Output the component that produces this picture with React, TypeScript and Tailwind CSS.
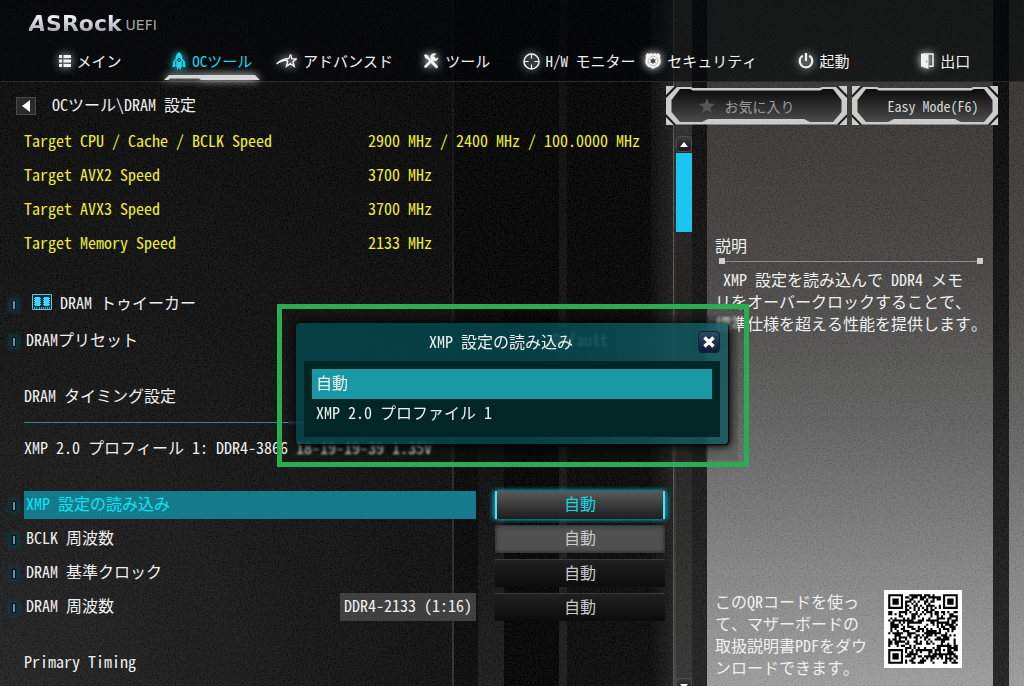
import type { ReactNode } from "react";

type Tone = "active" | "pressed" | "idle";

function ListIcon() {
  return (
    <svg viewBox="0 0 12 12" className="h-3 w-3" fill="currentColor" aria-hidden="true">
      <path d="M0 0h3v3H0zM0 4.5h3v3H0zM0 9h3v3H0zM4.5 0H12v3H4.5zM4.5 4.5H12v3H4.5zM4.5 9H12v3H4.5z" />
    </svg>
  );
}

function RocketIcon() {
  return (
    <svg viewBox="0 0 14 18" className="h-[18px] w-3.5" aria-hidden="true">
      <path
        fill="currentColor"
        d="M7 0C4.600 1.600 3.600 4 3.500 7L1.200 9.600.5 15.500 3.600 14.200 5 15v2.600h1.200V16h1.600v1.600H9V15l1.400-.8 3.100 1.300-.7-5.900L10.500 7C10.400 4 9.400 1.600 7 0z"
      />
      <path d="M3.700 9v4.500M10.300 9v4.500" stroke="#06282e" strokeWidth=".7" />
      <circle cx="7" cy="8" r="1.500" fill="none" stroke="#06282e" strokeWidth="1" />
    </svg>
  );
}

function ShootingStarIcon() {
  return (
    <svg viewBox="0 0 21 16" className="h-4 w-[21px]" fill="none" stroke="currentColor" aria-hidden="true">
      <path d="M14.500 1.500l1.500 4.400h4.200l-3.300 2.800 1.300 4.600-3.900-2.700-3.900 2.700 1.300-4.500-2.600-2.600" strokeWidth="1.400" />
      <path d="M14.500 1.500L13 5.400C8.500 5.600 4 7 .5 11c4-2.800 7.500-3.900 11.500-3.800" strokeWidth="1.200" />
    </svg>
  );
}

function ToolsIcon() {
  return (
    <svg viewBox="0 0 16 16" className="h-4 w-4" aria-hidden="true">
      <path d="M1 2.500L2.500 1l3 1.700.4 1.500 3 3-1.700 1.700-3-3-1.500-.4z" fill="currentColor" />
      <path d="M9.500 9.500l4 4.200" stroke="currentColor" strokeWidth="3" strokeLinecap="round" />
      <path d="M11 5L2.600 13.500" stroke="currentColor" strokeWidth="2.600" strokeLinecap="round" />
      <path d="M13.500 1A4 4 0 1 0 15.300 4.200l-2 1.400-2-.6-.6-1.900z" fill="currentColor" />
    </svg>
  );
}

function TargetIcon() {
  return (
    <svg viewBox="0 0 17 17" className="h-[17px] w-[17px]" fill="none" stroke="currentColor" aria-hidden="true">
      <circle cx="8.500" cy="8.500" r="7.500" strokeWidth="1.500" />
      <path d="M8.500 1v4.500M8.500 11.500V16M1 8.500h4.500M11.500 8.500H16" strokeWidth="1.200" />
    </svg>
  );
}

function BadgeIcon() {
  return (
    <svg viewBox="0 0 16 16" className="h-4 w-4" aria-hidden="true">
      <path
        fill="currentColor"
        d="M2.500 0l2 1 1.500-.9L8 1l2-.9 1.500.9 2-1L15.500 2.500c-1 2 .3 4 .2 6.500-.1 3-2.500 5-5.200 5.600L8 16l-2.500-1.400C2.800 14 .4 12 .3 9 .2 6.500 1.500 4.500.5 2.500z"
      />
      <circle cx="8" cy="8" r="4.800" fill="none" stroke="#999" strokeWidth=".6" />
      <path fill="#444" d="M8 4.500l.9 1.900 2.100-.1L9.900 8l1.100 1.700-2.100-.1L8 11.500l-.9-1.900-2.100.1L6.100 8 5 6.300l2.100.1z" />
    </svg>
  );
}

function PowerIcon() {
  return (
    <svg viewBox="0 0 16 16" className="h-4 w-4" fill="none" stroke="currentColor" strokeWidth="2.200" aria-hidden="true">
      <path d="M8 0v8" />
      <path d="M4.800 2.600a6.300 6.300 0 1 0 6.400 0" />
    </svg>
  );
}

function DoorIcon() {
  return (
    <svg viewBox="0 0 13 16" className="h-4 w-[13px]" aria-hidden="true">
      <path fill="currentColor" fillRule="evenodd" d="M0 .5L7.500 2v14L0 13.500zM5 7.500v2h1.300v-2z" />
      <path fill="none" stroke="currentColor" strokeWidth="1.500" d="M2 .9h10v12.300H8" />
    </svg>
  );
}

function DimmIcon() {
  return (
    <svg viewBox="0 0 20 16" className="h-4 w-5" aria-hidden="true">
      <path d="M.5.5h19v15H.5z" fill="#0b2f3c" stroke="#5cc8e8" />
      <path
        d="M3 3h5v9H3zM12 3h5v9h-5zM2 4h7v1H2zM2 6h7v1H2zM2 8h7v1H2zM2 10h7v1H2zM11 4h7v1h-7zM11 6h7v1h-7zM11 8h7v1h-7zM11 10h7v1h-7z"
        fill="#45d4fb"
      />
      <path d="M2 14h4M7 14h11" stroke="#5cc8e8" strokeWidth="1.500" strokeDasharray="1 1" />
    </svg>
  );
}

function Bullet() {
  return (
    <span className="mt-0.5 mr-1 ml-2.5 flex h-3 w-2 shrink-0 items-center justify-center bg-[#0a3038] shadow-[0_0_4px_1px_#0d3f48]">
      <span className="flex h-2.5 w-1 items-center justify-center bg-[#041319]">
        <span className="h-2 w-0.5 bg-[#6f8c9c]" />
      </span>
    </span>
  );
}

const NAV: { label: string; icon: ReactNode; active?: boolean }[] = [
  { label: "メイン", icon: <ListIcon /> },
  { label: "OCツール", icon: <RocketIcon />, active: true },
  { label: "アドバンスド", icon: <ShootingStarIcon /> },
  { label: "ツール", icon: <ToolsIcon /> },
  { label: "H/W モニター", icon: <TargetIcon /> },
  { label: "セキュリティ", icon: <BadgeIcon /> },
  { label: "起動", icon: <PowerIcon /> },
  { label: "出口", icon: <DoorIcon /> },
];

function Header() {
  return (
    <header className="flex h-[82px] flex-col justify-between border-b border-[#2a2a2a] bg-[#020506]/60 pt-3">
      <div className="flex items-end gap-1 pl-[29px]">
        <span className="bg-linear-to-b from-white via-[#c8ced6] to-[#8e979f] bg-clip-text font-['DejaVu_Sans'] text-[22px] leading-6 font-bold text-transparent">
          <i>A</i>SRock
        </span>
        <span className="font-['DejaVu_Sans'] text-sm leading-[22px] text-[#a4a8aa]">UEFI</span>
      </div>
      <nav className="grid grid-cols-8 pr-[17px] pl-[29px] text-[15px]">
        {NAV.map((item) => (
          <a
            key={item.label}
            href="#"
            className={
              "flex flex-col items-center whitespace-nowrap " + (item.active ? "text-[#1fd5ee]" : "text-[#f2f2f2]")
            }
          >
            <span className="flex h-7 items-center gap-1.5">
              <span className="drop-shadow-[0_0_4px_currentColor]">{item.icon}</span>
              {item.label}
            </span>
            <svg
              viewBox="0 0 96 6"
              className="h-1.5 w-24 drop-shadow-[0_0_4px_#ffffff]"
              aria-hidden="true"
              visibility={item.active ? "visible" : "hidden"}
            >
              <path d="M5 0h86l5 5H37l-2-1.500H6L4.500 5H0z" fill="#d6d6d6" />
            </svg>
          </a>
        ))}
      </nav>
    </header>
  );
}

function Frame({ w, children, className }: { w: number; children: ReactNode; className: string }) {
  return (
    <button type="button" className={"relative h-[39px] text-sm " + className}>
      <svg
        viewBox={`0 0 ${w} 39`}
        preserveAspectRatio="none"
        className="absolute inset-0 h-full w-full"
        aria-hidden="true"
      >
        <defs>
          <linearGradient id={`face${w}`} x1="0" y1="0" x2="0" y2="1">
            <stop offset="0" stopColor="#0b0b0b" />
            <stop offset="1" stopColor="#4c4c4c" />
          </linearGradient>
        </defs>
        <g fill="#cbcbcb">
          <path d={`M0 12L11 1H25L27 2H${w - 27}L${w - 25} 1H${w - 11}L${w} 12V28L${w - 10} 38.500H10L0 28z`} />
          <path d={`M0 0H9L0 9zM${w} 0V9L${w - 9} 0zM0 39V31L8 39zM${w} 39H${w - 8}L${w} 31z`} />
        </g>
        <path
          d={`M5.500 14L14 3H24L27 4.500H${w - 27}L${w - 24} 3H${w - 14}L${w - 5.5} 14V26L${w - 14} 36H${w - 37}L${w - 43} 33H42L36 36H14L5.500 26z`}
          fill={`url(#face${w})`}
        />
        <path
          d={`M0 10.500L10 0M${w} 10.500L${w - 10} 0M0 29.500L9 39M${w} 29.500L${w - 9} 39`}
          stroke="#161616"
          strokeWidth="1.400"
        />
      </svg>
      <span className="relative flex items-center justify-center gap-2.5 whitespace-nowrap">{children}</span>
    </button>
  );
}

function ValueButton({ tone, label }: { tone: Tone; label: string }) {
  const tones = {
    active:
      "border-x-2 border-[#53dcf4] bg-linear-to-b from-[#5a5a5a] to-[#1d1d1d] text-[#14d8e4] shadow-[-2px_0_5px_#159ab0,2px_0_5px_#159ab0]",
    pressed: "bg-[#505050] text-[#c9c9c9] shadow-[inset_0_0_5px_#1f1f1f]",
    idle: "border-t border-[#3a3a3a] bg-linear-to-b from-[#202020] to-[#0c0c0c] text-[#c9c9c9]",
  };
  return (
    <button
      type="button"
      aria-label={label}
      aria-haspopup="listbox"
      className={"h-7 w-[170px] shrink-0 pb-1 " + tones[tone]}
    >
      自動
    </button>
  );
}

function SettingRow({ label, tone, note }: { label: string; tone: Tone; note?: string }) {
  const selected = tone === "active";
  return (
    <div className="flex h-[34px] items-center">
      <Bullet />
      <div
        className={
          "mr-[19px] ml-0.5 flex h-7 min-w-0 flex-1 items-center justify-between pl-0.5 whitespace-nowrap " +
          (selected ? "bg-[#167a8d] text-[#12e3ee]" : "")
        }
      >
        <span className="pb-1">{label}</span>
        {note && <span className="bg-[#404040] px-1 pb-1 leading-6">{note}</span>}
      </div>
      <ValueButton tone={tone} label={label} />
    </div>
  );
}

const SPEEDS = [
  ["Target CPU / Cache / BCLK Speed", "2900 MHz / 2400 MHz / 100.0000 MHz"],
  ["Target AVX2 Speed", "3700 MHz"],
  ["Target AVX3 Speed", "3700 MHz"],
  ["Target Memory Speed", "2133 MHz"],
];

function Settings() {
  return (
    <section className="min-w-0 flex-1">
      <dl className="pl-6 text-[#eeee3a]">
        {SPEEDS.map(([name, value]) => (
          <div key={name} className="flex h-[34px] items-center pb-1 whitespace-nowrap">
            <dt className="w-[344px] shrink-0">{name}</dt>
            <dd>{value}</dd>
          </div>
        ))}
      </dl>
      <div className="mt-[26px] flex h-[34px] items-center">
        <Bullet />
        <a href="#" className="ml-2.5 flex items-center gap-2 pb-1">
          <DimmIcon />
          DRAM トゥイーカー
        </a>
      </div>
      <div className="mt-[3px] flex h-[34px] items-center">
        <Bullet />
        <span className="ml-0.5 min-w-0 flex-1 pb-1 pl-0.5">DRAMプリセット</span>
        <button type="button" aria-label="DRAMプリセット" className="w-[170px] pb-1 text-[#c9c9c9]">
          Default
        </button>
      </div>
      <h2 className="mt-[22px] flex h-[34px] items-center pb-1 pl-6">DRAM タイミング設定</h2>
      <hr className="mt-2 ml-6 h-px border-0 bg-[#3f8299]" />
      <p className="mt-[9px] flex h-[34px] items-center pb-1 pl-6 whitespace-nowrap">
        XMP 2.0 プロフィール 1: DDR4-3866 18-19-19-39 1.35V
      </p>
      <div className="mt-[22px]">
        <SettingRow label="XMP 設定の読み込み" tone="active" />
        <SettingRow label="BCLK 周波数" tone="pressed" />
        <SettingRow label="DRAM 基準クロック" tone="idle" />
        <SettingRow label="DRAM 周波数" tone="idle" note="DDR4-2133 (1:16)" />
      </div>
      <h2 className="mt-[22px] flex h-[34px] items-center pb-1 pl-6">Primary Timing</h2>
    </section>
  );
}

function ScrollBar() {
  const cap =
    "flex h-4 w-4 shrink-0 items-center justify-center rounded-sm border border-[#4b4b4b] bg-linear-to-b from-[#3a3a3a] to-[#1b1b1b]";
  return (
    <div className="mt-[11px] -mb-2 ml-[11px] flex w-4 shrink-0 flex-col">
      <button type="button" aria-label="上へ" className={cap}>
        <svg viewBox="0 0 8 5" className="h-[5px] w-2" fill="#fff" aria-hidden="true">
          <path d="M4 0l4 5H0z" />
        </svg>
      </button>
      <div className="flex-1 bg-black/20 pt-px">
        <div className="h-[79px] bg-[#1cc4f0]" />
      </div>
      <button type="button" aria-label="下へ" className={cap}>
        <svg viewBox="0 0 8 5" className="h-[5px] w-2" fill="#fff" aria-hidden="true">
          <path d="M4 5l4-5H0z" />
        </svg>
      </button>
    </div>
  );
}

const QR_SIZE = 33;

function finder(x: number, y: number) {
  const far = QR_SIZE - 7;
  const fx = x < 8 ? x : x >= far - 1 ? x - far : -9;
  const fy = y < 8 ? y : y >= far - 1 ? y - far : -9;
  if (fx === -9 || fy === -9 || (x > 8 && y > 8)) return null;
  if (fx < 0 || fy < 0 || fx > 6 || fy > 6) return false;
  const ring = Math.max(Math.abs(fx - 3), Math.abs(fy - 3));
  return ring !== 2;
}

function moduleOn(x: number, y: number) {
  const f = finder(x, y);
  if (f !== null) return f;
  const ring = Math.max(Math.abs(x - 26), Math.abs(y - 26));
  if (ring <= 2) return ring !== 1;
  if (x === 6) return y % 2 === 0;
  if (y === 6) return x % 2 === 0;
  let h = (x * 374761393 + y * 668265263) | 0;
  h = Math.imul(h ^ (h >>> 13), 1274126177);
  return ((h ^ (h >>> 16)) & 15) < 8;
}

function QrCode() {
  let d = "";
  for (let y = 0; y < QR_SIZE; y++) {
    for (let x = 0; x < QR_SIZE; x++) {
      if (moduleOn(x, y)) d += `M${x} ${y}h1v1h-1z`;
    }
  }
  return (
    <svg viewBox="-2 -2 37 37" className="h-[78px] w-[78px] shrink-0 bg-white" role="img">
      <path d={d} fill="#000" />
    </svg>
  );
}

function Help() {
  return (
    <aside className="mr-[31px] ml-[15px] flex w-[286px] shrink-0 flex-col pl-2 leading-[22px]">
      <h2 className="mt-[109px]">説明</h2>
      <div className="mt-0.5 mr-2.5 ml-1 flex h-1.5 items-center">
        <span className="h-1.5 w-1.5 bg-[#cfcfcf]" />
        <span className="h-px flex-1 bg-[#8b8b88]" />
        <span className="h-1.5 w-1.5 bg-[#cfcfcf]" />
      </div>
      <p className="mt-1 whitespace-pre">
        {" XMP 設定を読み込んで DDR4 メモ\nリをオーバークロックすることで、\n標準仕様を超える性能を提供します。"}
      </p>
      <div className="mt-auto mb-2 flex items-start justify-between pr-[31px]">
        <p className="w-[154px] whitespace-pre">
          {"このQRコードを使っ\nて、マザーボードの\n取扱説明書PDFをダウ\nンロードできます。"}
        </p>
        <QrCode />
      </div>
    </aside>
  );
}

function Dialog() {
  return (
    <div className="absolute top-[304px] left-1/2 ml-px w-[472px] -translate-x-1/2 border-[5px] border-[#2aad50] pt-3.5 pr-4 pb-[18px] pl-3.5">
      <div className="absolute inset-x-1.5 top-1.5 bottom-0.5 bg-black/10 backdrop-blur-[1px]" />
      <div
        role="dialog"
        aria-labelledby="dialog-title"
        className="relative rounded bg-linear-to-r from-[#04484e]/85 via-[#04484e]/85 to-[#145c62]/85 px-2 pb-[7px] shadow-[1px_1px_2px_#000,3px_3px_8px_#000a,0_0_8px_#000a]"
      >
        <div className="flex h-[38px] items-center">
          <h2 id="dialog-title" className="flex-1 pb-0.5 text-center">
            XMP 設定の読み込み
          </h2>
          <button
            type="button"
            aria-label="閉じる"
            className="flex h-[22px] w-[22px] items-center justify-center rounded-sm border border-[#0b2238] bg-linear-to-b from-[#2c4a66] to-[#0e1c33]"
          >
            <svg viewBox="0 0 12 12" className="h-3 w-3" stroke="#fff" strokeWidth="3.400" aria-hidden="true">
              <path d="M1.500 1.500l9 9M10.500 1.500l-9 9" />
            </svg>
          </button>
        </div>
        <div role="listbox" aria-labelledby="dialog-title" className="flex flex-col bg-[#022626] p-2">
          <button
            type="button"
            role="option"
            aria-selected="true"
            className="h-[30px] bg-[#1a97a4] px-1 pb-1 text-left"
          >
            自動
          </button>
          <button type="button" role="option" aria-selected="false" className="h-[30px] px-1 pb-1 text-left">
            XMP 2.0 プロファイル 1
          </button>
        </div>
      </div>
    </div>
  );
}

function Backdrop() {
  return (
    <div className="absolute inset-0 -z-10 bg-[#060606]" aria-hidden="true">
      <div className="flex h-full">
        <div className="flex-1 bg-[radial-gradient(circle_at_0%_100%,#232323,#101010_50%,#060606_90%)]" />
        <div className="w-0.5 bg-linear-to-b from-[#0c0c0c] to-[#333333]" />
        <div className="w-6 bg-linear-to-b from-[#020202] to-[#090909]" />
        <div className="w-[26px] bg-linear-to-b from-[#020202] via-[#050505] to-[#1c1c1c]" />
        <div className="w-[55px] bg-[#020202]" />
        <div className="w-2 bg-linear-to-b from-[#080808] to-[#1c1c1c]" />
        <div className="w-[84px] bg-linear-to-b from-[#020202] to-[#0b0b0b]" />
        <div className="w-[22px] bg-linear-to-r from-[#0a0a0a] to-[#1f1f1f]" />
        <div className="w-px bg-[#55544f]" />
        <div className="w-[18px] bg-linear-to-b from-[#33322f] via-[#262523] to-[#454545]" />
        <div className="w-[15px] bg-linear-to-b from-[#080808] to-[#222222]" />
        <div className="w-[286px] bg-[linear-gradient(#2f2e2c,#3b3a37_20%,#484745_40%,#646464_62%,#898989_84%,#a0a0a0)]" />
        <div className="w-4 bg-linear-to-b from-[#060606] to-[#222222]" />
        <div className="w-[15px] bg-[linear-gradient(#2f2e2c,#3b3a37_20%,#484745_40%,#646464_62%,#898989_84%,#a0a0a0)]" />
      </div>
      <svg className="absolute inset-0 h-full w-full opacity-15">
        <filter id="grain">
          <feTurbulence type="fractalNoise" baseFrequency="0.600" numOctaves="2" seed="4" />
          <feColorMatrix type="matrix" values="1.5 0 0 0 -.5 1.5 0 0 0 -.5 1.5 0 0 0 -.5 0 0 0 0 .5" />
        </filter>
        <rect width="100%" height="100%" filter="url(#grain)" />
      </svg>
    </div>
  );
}

export default function App() {
  return (
    <div className="relative isolate flex min-h-screen flex-col overflow-hidden font-['Noto_Sans_Mono_CJK_JP','Noto_Sans_CJK_JP',monospace] text-base leading-[22px] text-[#efefef]">
      <Backdrop />
      <Header />
      <main className="flex flex-1 flex-col">
        <div className="flex items-center pt-1 pr-[26px] pl-4">
          <button
            type="button"
            aria-label="戻る"
            className="flex h-[18px] w-5 items-center justify-center border border-[#4a4a4a] bg-[#2b2b2b]"
          >
            <svg viewBox="0 0 8 12" className="h-3 w-2" fill="#fff" aria-hidden="true">
              <path d="M8 0v12L0 6z" />
            </svg>
          </button>
          <h1 className="ml-4 flex-1 pb-1">OCツール\DRAM 設定</h1>
          <Frame w={181} className="w-[181px] pr-5 text-[#9a9a9a]">
            <svg viewBox="0 0 16 16" className="h-4 w-4" fill="#555" aria-hidden="true">
              <path d="M8 0l2.200 5.600 5.800.3-4.600 3.700L13 15.500 8 12.200l-5 3.300 1.600-5.900L0 5.900l5.800-.3z" />
            </svg>
            お気に入り
          </Frame>
          <Frame w={146} className="ml-[5px] w-[146px] pl-4 text-[#d6d6d6]">
            Easy Mode(F6)
          </Frame>
        </div>
        <div className="flex flex-1">
          <Settings />
          <ScrollBar />
          <Help />
        </div>
      </main>
      <Dialog />
    </div>
  );
}
